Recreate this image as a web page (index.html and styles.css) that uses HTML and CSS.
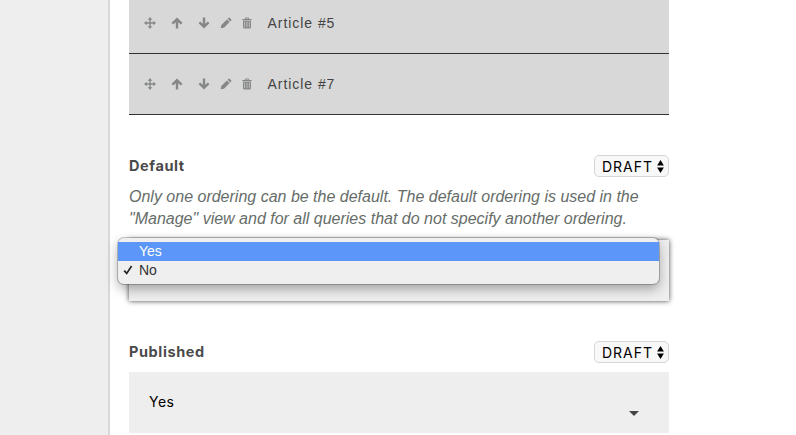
FILE: index.html
```html
<!DOCTYPE html>
<html lang="en">
<head>
<meta charset="utf-8">
<title>Ordering</title>
<link rel="stylesheet" href="styles.css">
</head>
<body>
<svg class="defs" aria-hidden="true">
  <symbol id="move" viewBox="0 0 12 12"><path d="M6 0 8.3 2.7H6.7V5.3H9.3V3.7L12 6 9.3 8.3V6.7H6.7V9.3H8.3L6 12 3.7 9.3H5.3V6.7H2.7V8.3L0 6 2.7 3.7V5.3H5.3V2.7H3.7Z"/></symbol>
  <symbol id="up" viewBox="0 0 12 12"><path d="M6 .4 11.4 5.8 9.9 7.4 7.2 5.2V11.4H4.8V5.2L2.1 7.4.6 5.8Z"/></symbol>
  <symbol id="down" viewBox="0 0 12 12"><path d="M6 11.6 11.4 6.2 9.9 4.6 7.2 6.8V.6H4.8V6.8L2.1 4.6.6 6.2Z"/></symbol>
  <symbol id="pencil" viewBox="0 0 12 12"><path d="M.7 11.3 1.3 8 6.9 2.4 9.6 5.1 4 10.7ZM7.6 1.7 8.6.8Q9.2.3 9.8.9L11.1 2.2Q11.7 2.8 11.2 3.4L10.3 4.4Z"/></symbol>
  <symbol id="trash" viewBox="0 0 12 12"><path fill-rule="evenodd" d="M1.3 2H3.8L4.4.6H7.6L8.2 2H10.7V3.1H1.3ZM4.7 2H7.3L7 1.4H5ZM2 3.4H10V10.3Q10 11.4 9 11.4H3Q2 11.4 2 10.3ZM3.4 4.5V10.2H4.1V4.5ZM5.65 4.5V10.2H6.35V4.5ZM7.9 4.5V10.2H8.6V4.5Z"/></symbol>
  <symbol id="sort" viewBox="0 0 7 13"><path d="M3.5 0 6.9 5.4H.1ZM3.5 13 6.9 7.6H.1Z"/></symbol>
</svg>
<div class="page">
  <aside class="sidebar"></aside>
  <main class="content">
    <ul class="articles">
      <li class="article">
        <svg class="icon icon-move"><use href="#move"/></svg><svg class="icon icon-up"><use href="#up"/></svg><svg class="icon icon-down"><use href="#down"/></svg><svg class="icon icon-edit"><use href="#pencil"/></svg><svg class="icon icon-trash"><use href="#trash"/></svg>
        <span class="title">Article #5</span>
      </li>
      <li class="article">
        <svg class="icon icon-move"><use href="#move"/></svg><svg class="icon icon-up"><use href="#up"/></svg><svg class="icon icon-down"><use href="#down"/></svg><svg class="icon icon-edit"><use href="#pencil"/></svg><svg class="icon icon-trash"><use href="#trash"/></svg>
        <span class="title">Article #7</span>
      </li>
    </ul>
    <section class="field">
      <header class="field-head">
        <span class="label">Default</span>
        <span class="status">DRAFT<svg class="sort"><use href="#sort"/></svg></span>
      </header>
      <p class="help"><span class="line">Only one ordering can be the default. The default ordering is used in the</span> <span class="line">"Manage" view and for all queries that do not specify another ordering.</span></p>
      <div class="select focused">
        <div class="menu">
          <div class="option selected">Yes</div>
          <div class="option"><svg class="check" viewBox="0 0 10 10"><path d="M1.2 5.6 3.7 8.4 8.6 1"/></svg>No</div>
        </div>
      </div>
    </section>
    <section class="field published">
      <header class="field-head">
        <span class="label">Published</span>
        <span class="status">DRAFT<svg class="sort"><use href="#sort"/></svg></span>
      </header>
      <div class="select"><span>Yes</span><i class="caret"></i></div>
    </section>
  </main>
</div>
</body>
</html>
```
FILE: styles.css
```css
* { box-sizing: border-box; }
body {
  margin: 0;
  overflow: hidden;
  background: #fff;
  color: #444;
  font-family: "Liberation Sans", Arial, sans-serif;
}
.defs { position: absolute; width: 0; height: 0; }
.page { display: flex; height: 435px; }
.sidebar {
  flex: none;
  width: 110px;
  background: #eee;
  border-right: 2px solid #d8d8d8;
}
.content { width: 540px; margin-left: 19px; }
.articles { margin: 0; padding: 0; list-style: none; }
.article {
  display: flex;
  align-items: center;
  height: 61px;
  padding-left: 14px;
  background: #d8d8d8;
  border-bottom: 1px solid #333;
}
.article:first-child { height: 54px; padding-bottom: 7px; }
.icon { flex: none; width: 12px; height: 12px; fill: #858886; }
.icon-move { margin-left: 0.5px; }
.icon-up { margin-left: 15.5px; }
.icon-down { margin-left: 15px; }
.icon-edit { margin-left: 9.5px; }
.icon-trash { margin-left: 9px; }
.title {
  margin-left: 15px;
  font-size: 14px;
  line-height: 20px;
  letter-spacing: 0.95px;
}
.field { padding-top: 40px; }
.field-head {
  display: flex;
  align-items: center;
  justify-content: space-between;
  height: 22px;
}
.label {
  padding-bottom: 1px;
  font-family: Inter, sans-serif;
  font-size: 14.5px;
  font-weight: 700;
  letter-spacing: 0.6px;
  color: #4a4a4a;
}
.status {
  display: flex;
  align-items: center;
  width: 75px;
  height: 22px;
  padding-left: 7px;
  border: 1px solid #d6d6d6;
  border-radius: 5px;
  background: #f8f8f8;
  color: #000;
  font-family: Inter, sans-serif;
  font-size: 14px;
  letter-spacing: 1px;
}
.sort { flex: none; width: 7px; height: 13px; margin: 0 4px 0 auto; }
.help {
  margin: 9px 0 10px;
  font-size: 16px;
  font-style: italic;
  line-height: 22px;
  color: #666d69;
}
.line { display: block; white-space: nowrap; }
.select {
  position: relative;
  display: flex;
  height: 61px;
  padding: 20px;
  background: #eee;
  color: #000;
  font-family: Inter, sans-serif;
  font-size: 14px;
  line-height: 20px;
  letter-spacing: 0.5px;
}
.focused { box-shadow: 0 0 5px #444; }
.menu {
  position: absolute;
  left: -11px;
  top: -2px;
  width: 541px;
  height: 46px;
  padding-top: 4px;
  border-radius: 6px;
  background: #efefef;
  box-shadow: 0 0 0 1px rgba(0, 0, 0, .22), 0 5px 12px rgba(0, 0, 0, .32);
  color: #333;
  font-family: "Liberation Sans", sans-serif;
  font-size: 14px;
  letter-spacing: 0;
}
.option { position: relative; height: 19px; padding-left: 21px; line-height: 19px; }
.selected { background: #5b96f8; color: #fff; }
.check {
  position: absolute;
  left: 5px;
  top: 4px;
  width: 10px;
  height: 10px;
  fill: none;
  stroke: #222;
  stroke-width: 1.7;
}
.published .select { margin-top: 9px; }
.caret {
  align-self: flex-end;
  margin: 0 10px -3px auto;
  border: 5px solid transparent;
  border-top-color: #444;
  border-bottom: 0;
}
```
